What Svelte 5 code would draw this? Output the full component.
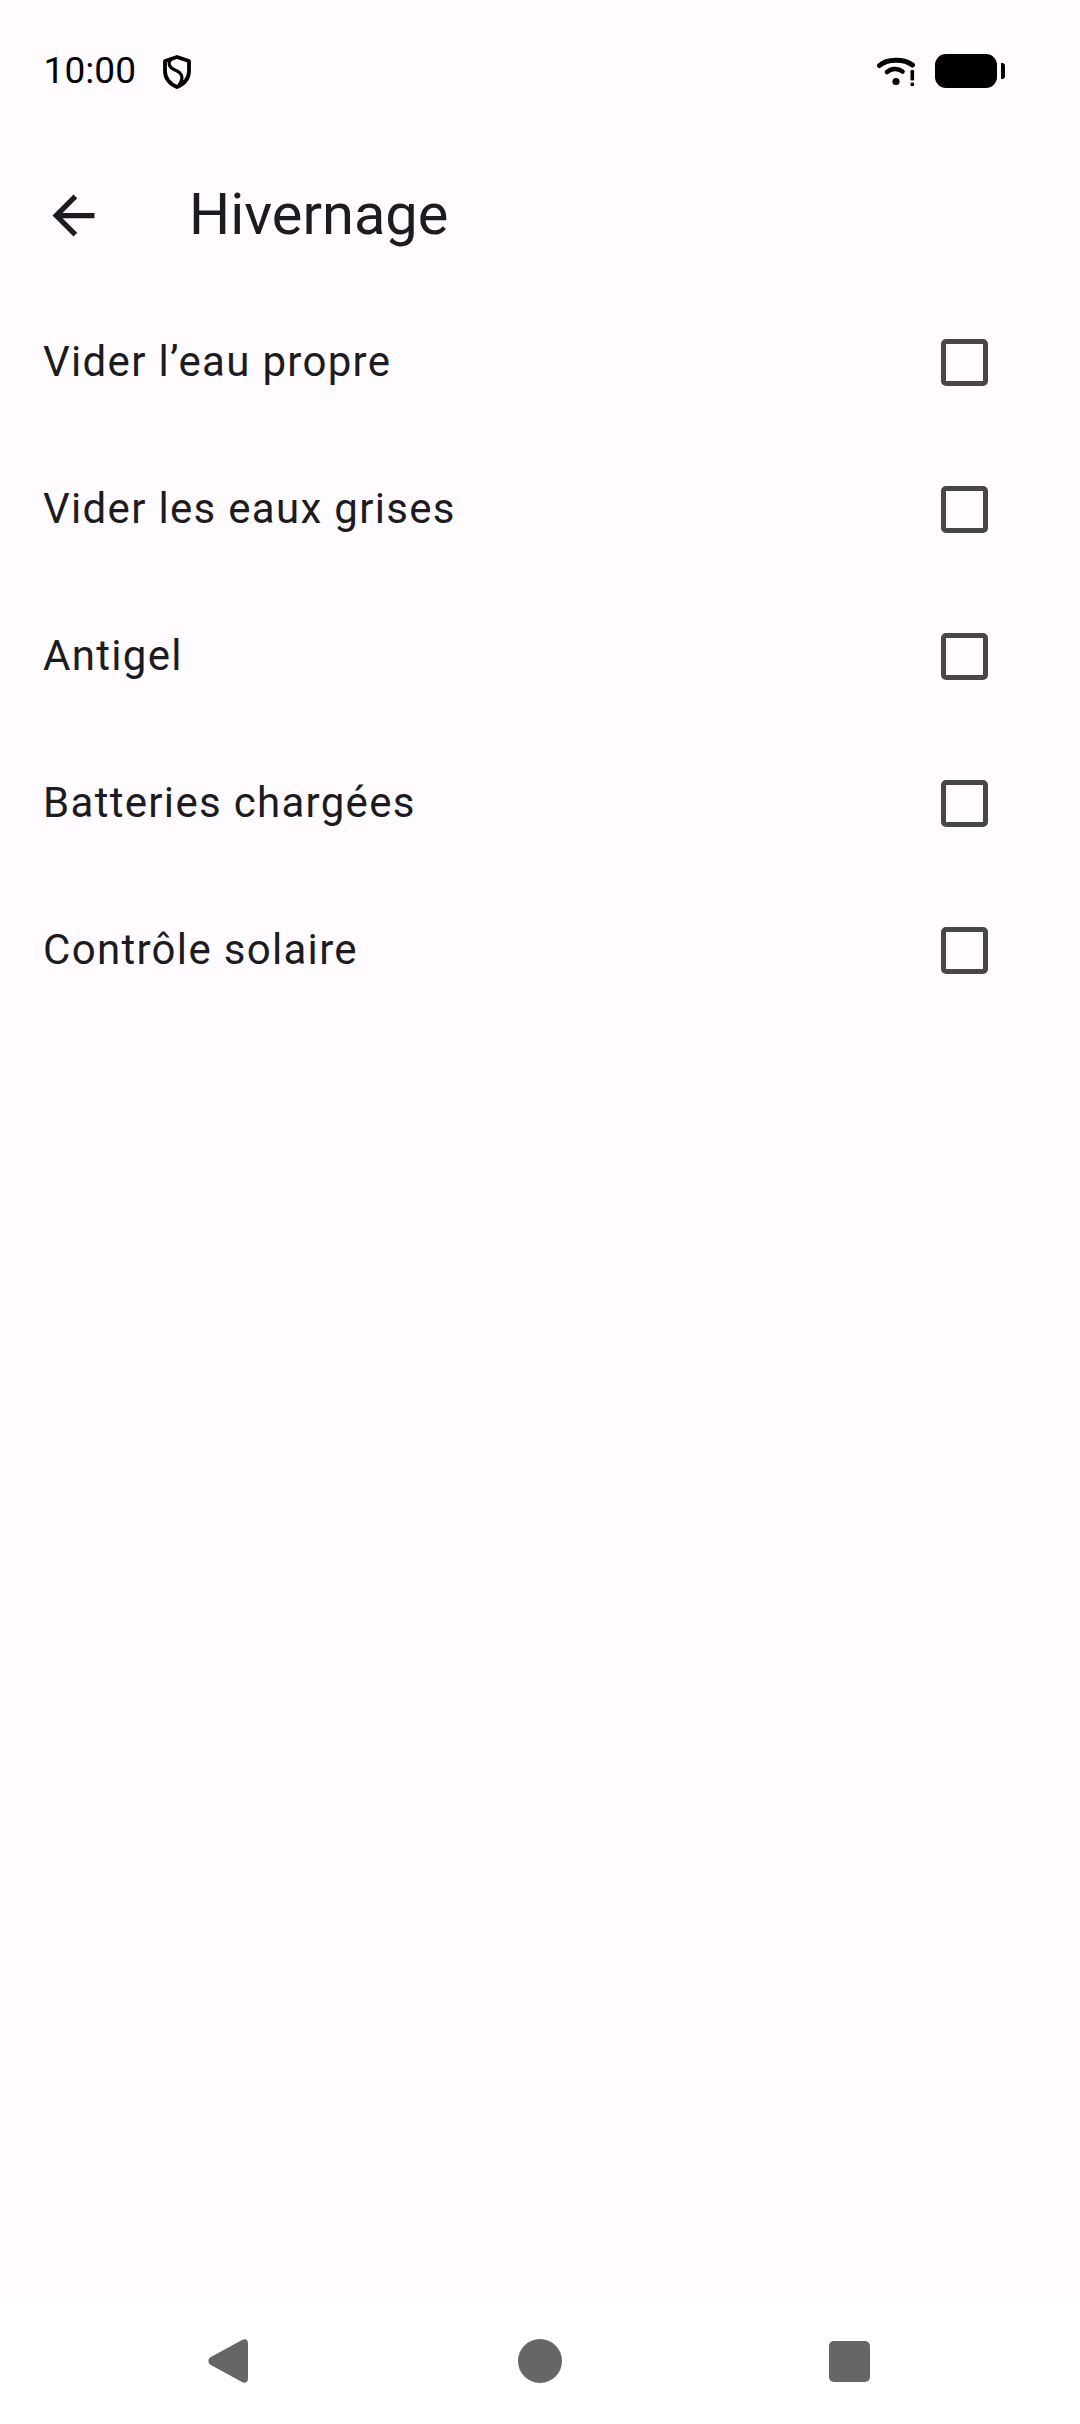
<script>
  const items = ['Vider l’eau propre', 'Vider les eaux grises', 'Antigel', 'Batteries chargées', 'Contrôle solaire'];
</script>

<div class="page">
  <div class="status">
    <span class="time">10:00</span>
    <svg class="shield" viewBox="0 0 28 34" width="28" height="34">
      <path d="M14 2 L26 6 V16 C26 23.5 21 29 14 32 C7 29 2 23.5 2 16 V6 Z" fill="none" stroke="#000" stroke-width="3.8" stroke-linejoin="round"/>
      <path d="M8 4 C4 9 7 13 12 15 C18 17.5 22 22 16 30" fill="none" stroke="#000" stroke-width="3.2"/>
    </svg>
    <span class="spacer"></span>
    <svg class="wifi" viewBox="0 0 38 30" width="38" height="30">
      <path d="M2.5 8.5 C10 1.5 27 1.5 35.5 8" fill="none" stroke="#000" stroke-width="5" stroke-linecap="round"/>
      <path d="M10 15 C14 11 21 11 25.5 14.5" fill="none" stroke="#000" stroke-width="4.6" stroke-linecap="round"/>
      <circle cx="19" cy="24.5" r="3.6" fill="#000"/>
      <rect x="33.5" y="13" width="3.6" height="10.5" rx="1.2" fill="#000"/>
      <rect x="33.5" y="25.5" width="3.6" height="3.6" rx="1.2" fill="#000"/>
    </svg>
    <div class="battery"></div>
    <div class="nub"></div>
  </div>

  <header class="appbar">
    <svg class="back" viewBox="0 0 24 24" width="63" height="63">
      <path d="M20 11H7.83l5.59-5.59L12 4l-8 8 8 8 1.41-1.41L7.83 13H20v-2z" fill="#1c1b1f"/>
    </svg>
    <h1>Hivernage</h1>
  </header>

  <main class="list">
    {#each items as item}
      <div class="row">
        <span class="label">{item}</span>
        <span class="check"></span>
      </div>
    {/each}
  </main>

  <nav class="nav">
    <svg viewBox="0 0 40 44" width="40" height="44">
      <path d="M33.5 1.2 Q40 -1.6 40 5 V39 Q40 45.6 33.5 42.8 L2 25.5 Q-1.4 22 2 18.5 Z" fill="#666"/>
    </svg>
    <span class="circle"></span>
    <span class="square"></span>
  </nav>
</div>

<style>
  :global(body) {
    margin: 0;
    background: #fffbfe;
  }
  .page {
    width: 1080px;
    height: 2424px;
    display: flex;
    flex-direction: column;
    background: #fffbfe;
    font-family: Roboto, sans-serif;
    color: #1c1b1f;
  }
  .status {
    height: 142px;
    flex: none;
    display: flex;
    align-items: center;
    padding: 0 75px 0 43.5px;
    box-sizing: border-box;
    color: #000;
  }
  .time {
    font-size: 37px;
    letter-spacing: 0.1px;
    width: 119.5px;
    padding-bottom: 2px;
  }
  .shield {
    display: block;
    margin-top: 2px;
  }
  .spacer {
    flex: 1;
  }
  .wifi {
    display: block;
    margin-right: 20px;
    margin-top: 2px;
  }
  .battery {
    width: 62px;
    height: 34px;
    background: #000;
    border-radius: 11px;
  }
  .nub {
    width: 4px;
    height: 16px;
    margin-left: 4px;
    background: #000;
    border-radius: 0 3px 3px 0;
  }
  .appbar {
    height: 147px;
    flex: none;
    display: flex;
    align-items: center;
    padding-left: 42px;
  }
  .back {
    display: block;
    margin-right: 84px;
  }
  h1 {
    margin: 0 0 2px;
    font-size: 57.75px;
    font-weight: 400;
    line-height: 1;
  }
  .list {
    flex: 1;
  }
  .row {
    height: 147px;
    display: flex;
    align-items: center;
    justify-content: space-between;
    padding: 0 92px 0 43px;
  }
  .label {
    font-size: 42px;
    letter-spacing: 1.31px;
    padding-bottom: 2px;
  }
  .check {
    width: 47px;
    height: 47px;
    box-sizing: border-box;
    border: 5px solid #474649;
    border-radius: 5px;
  }
  .nav {
    height: 126px;
    flex: none;
    display: flex;
    align-items: center;
    background: #fff;
    padding-left: 208px;
  }
  .circle {
    width: 44px;
    height: 44px;
    margin-left: 269.5px;
    border-radius: 50%;
    background: #666;
  }
  .square {
    width: 41px;
    height: 41px;
    margin-left: 267.5px;
    border-radius: 5px;
    background: #666;
  }
</style>
